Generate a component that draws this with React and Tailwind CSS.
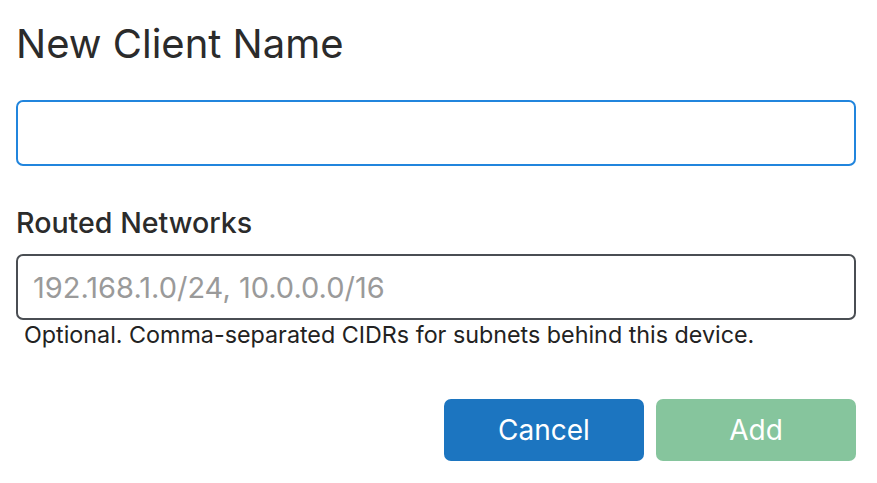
import React, { useState } from 'react';

const App = () => {
  const [name, setName] = useState('');
  const [networks, setNetworks] = useState('');

  return (
    <div className="w-[877px] h-[483px] bg-white font-['Inter','Noto_Sans',sans-serif] text-[#2b2b2b]">
      <div className="pt-[20px] pl-[16px]">
        <div className="w-[840px]">
          <h1 className="text-[40px] leading-[48px] font-normal">New Client Name</h1>

          <input
            type="text"
            value={name}
            onChange={(e) => setName(e.target.value)}
            className="mt-[32px] block w-full h-[66px] px-[15px] rounded-[7px] border-2 border-[#2185dd] text-[29px] outline-none"
          />

          <label className="block mt-[40px] text-[28.6px] leading-[34px] font-medium">Routed Networks</label>

          <input
            type="text"
            value={networks}
            onChange={(e) => setNetworks(e.target.value)}
            placeholder="192.168.1.0/24, 10.0.0.0/16"
            className="mt-[14px] block w-full h-[66px] px-[15px] rounded-[7px] border-2 border-[#4a4e53] text-[29px] outline-none placeholder:text-[#9a9a9a]"
          />
          <p className="ml-[8px] mt-[1px] text-[23.3px] leading-[28px] text-[#222]">
            Optional. Comma-separated CIDRs for subnets behind this device.
          </p>

          {/* Action buttons */}
          <div className="mt-[50px] flex justify-end gap-[12px]">
            <button className="w-[200px] h-[62px] rounded-[7px] bg-[#1c75c0] text-white text-[28px]">
              Cancel
            </button>
            <button disabled className="w-[200px] h-[62px] rounded-[7px] bg-[#86c59d] text-white text-[28px]">
              Add
            </button>
          </div>
        </div>
      </div>
    </div>
  );
};

export default App;
